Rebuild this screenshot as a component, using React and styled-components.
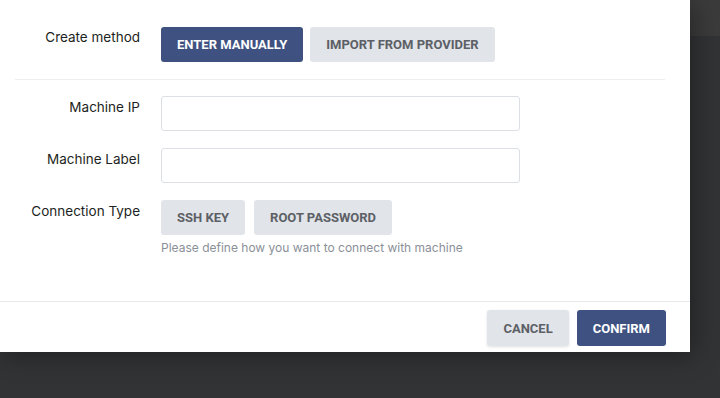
import styled, { createGlobalStyle } from 'styled-components';

const Global = createGlobalStyle`
  html, body {
    margin: 0;
    padding: 0;
    background: #323335;
  }
  * {
    box-sizing: border-box;
  }
`;

const Page = styled.div`
  position: relative;
  width: 720px;
  height: 398px;
  overflow: hidden;
  background: #323335;
`;

const TopBar = styled.div`
  height: 36px;
  background: #3b3b3c;
`;

const Modal = styled.div`
  position: absolute;
  left: 0;
  top: 0;
  width: 690px;
  height: 352px;
  background: #fff;
  box-shadow: 4px 4px 24px rgba(0, 0, 0, 0.35);
  display: flex;
  flex-direction: column;
`;

const Body = styled.div`
  flex: 1;
  padding: 27px 25px 0 15px;
  display: flex;
  flex-direction: column;
`;

const Row = styled.div`
  display: flex;
  align-items: flex-start;
  gap: 21px;
  margin-bottom: ${p => p.$gap || 17}px;
`;

const Label = styled.div`
  width: 125px;
  flex: none;
  text-align: right;
  font-family: Inter, "Noto Sans", sans-serif;
  font-size: 13.5px;
  line-height: 16px;
  color: #1d1f22;
  padding-top: ${p => p.$offset ?? 2}px;
`;

const Control = styled.div`
  display: flex;
  flex-direction: column;
`;

const ButtonGroup = styled.div`
  display: flex;
  gap: ${p => p.$gap || 7}px;
`;

const Button = styled.button`
  height: ${p => p.$height || 35}px;
  padding: 0 ${p => p.$pad || 16}px;
  border: none;
  border-radius: 3px;
  font-family: Roboto, "Liberation Sans", sans-serif;
  font-weight: 700;
  font-size: 13px;
  text-transform: uppercase;
  cursor: pointer;
  background: ${p => (p.$primary ? '#3e5180' : '#e1e4e8')};
  color: ${p => (p.$primary ? '#ffffff' : '#5c6066')};
  box-shadow: ${p => (p.$raised ? '0 1px 3px rgba(0,0,0,0.12)' : 'none')};
`;

const Divider = styled.hr`
  margin: 0 0 16px;
  border: none;
  border-top: 1px solid #eceef0;
  width: 650px;
`;

const Input = styled.input`
  width: 359px;
  height: 35px;
  border: 1px solid #dcdfe3;
  border-radius: 3px;
  padding: 0 10px;
  font-family: Inter, sans-serif;
  font-size: 13px;
  outline: none;
`;

const Help = styled.div`
  margin-top: 6px;
  font-family: Inter, "Noto Sans", sans-serif;
  font-size: 12px;
  line-height: 14px;
  color: #8b9098;
`;

const Footer = styled.div`
  border-top: 1px solid #e6e8ea;
  padding: 8px 24px 6px;
  display: flex;
  justify-content: flex-end;
  gap: 8px;
`;

export default function App() {
  return (
    <Page>
      <Global />
      <TopBar />
      <Modal>
        <Body>
          <Row>
            <Label>Create method</Label>
            <ButtonGroup>
              <Button $primary>Enter manually</Button>
              <Button>Import from provider</Button>
            </ButtonGroup>
          </Row>
          <Divider />
          <Row>
            <Label $offset={3}>Machine IP</Label>
            <Input />
          </Row>
          <Row>
            <Label $offset={3}>Machine Label</Label>
            <Input />
          </Row>
          <Row>
            <Label $offset={3}>Connection Type</Label>
            <Control>
              <ButtonGroup $gap={9}>
                <Button>SSH key</Button>
                <Button>Root password</Button>
              </ButtonGroup>
              <Help>Please define how you want to connect with machine</Help>
            </Control>
          </Row>
        </Body>
        <Footer>
          <Button $height={36} $raised>Cancel</Button>
          <Button $height={36} $primary>Confirm</Button>
        </Footer>
      </Modal>
    </Page>
  );
}
